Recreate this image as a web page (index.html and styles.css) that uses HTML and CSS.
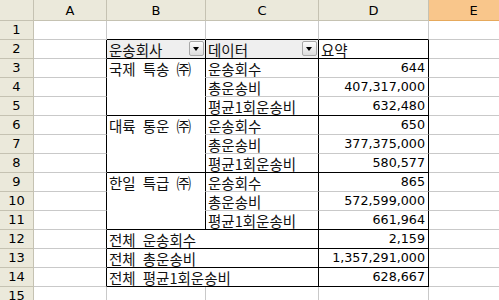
FILE: index.html
```html
<!DOCTYPE html>
<html lang="ko">
<head>
<meta charset="utf-8">
<link rel="stylesheet" href="styles.css">
</head>
<body>
<div class="sheet">
  <div class="corner"></div>
  <div class="ch">A</div>
  <div class="ch">B</div>
  <div class="ch">C</div>
  <div class="ch">D</div>
  <div class="ch sel">E</div>

  <div class="rh">1</div>
  <div class="c"></div>
  <div class="c bb"></div>
  <div class="c bb"></div>
  <div class="c bb"></div>
  <div class="c"></div>

  <div class="rh">2</div>
  <div class="c br"></div>
  <div class="c br bb field"><span class="fl">운송회사</span><span class="dd"></span></div>
  <div class="c br bb field"><span class="fl">데이터</span><span class="dd"></span></div>
  <div class="c br bb t">요약</div>
  <div class="c"></div>

  <div class="rh">3</div>
  <div class="c br"></div>
  <div class="c br nb t">국제 특송 ㈜</div>
  <div class="c br t">운송회수</div>
  <div class="c br n">644</div>
  <div class="c"></div>

  <div class="rh">4</div>
  <div class="c br"></div>
  <div class="c br nb"></div>
  <div class="c br t">총운송비</div>
  <div class="c br n">407,317,000</div>
  <div class="c"></div>

  <div class="rh">5</div>
  <div class="c br"></div>
  <div class="c br bb"></div>
  <div class="c br bb t">평균1회운송비</div>
  <div class="c br bb n">632,480</div>
  <div class="c"></div>

  <div class="rh">6</div>
  <div class="c br"></div>
  <div class="c br nb t">대륙 통운 ㈜</div>
  <div class="c br t">운송회수</div>
  <div class="c br n">650</div>
  <div class="c"></div>

  <div class="rh">7</div>
  <div class="c br"></div>
  <div class="c br nb"></div>
  <div class="c br t">총운송비</div>
  <div class="c br n">377,375,000</div>
  <div class="c"></div>

  <div class="rh">8</div>
  <div class="c br"></div>
  <div class="c br bb"></div>
  <div class="c br bb t">평균1회운송비</div>
  <div class="c br bb n">580,577</div>
  <div class="c"></div>

  <div class="rh">9</div>
  <div class="c br"></div>
  <div class="c br nb t">한일 특급 ㈜</div>
  <div class="c br t">운송회수</div>
  <div class="c br n">865</div>
  <div class="c"></div>

  <div class="rh">10</div>
  <div class="c br"></div>
  <div class="c br nb"></div>
  <div class="c br t">총운송비</div>
  <div class="c br n">572,599,000</div>
  <div class="c"></div>

  <div class="rh">11</div>
  <div class="c br"></div>
  <div class="c br bb"></div>
  <div class="c br bb t">평균1회운송비</div>
  <div class="c br bb n">661,964</div>
  <div class="c"></div>

  <div class="rh">12</div>
  <div class="c br"></div>
  <div class="c br bb t span2">전체 운송회수</div>
  <div class="c br bb n">2,159</div>
  <div class="c"></div>

  <div class="rh">13</div>
  <div class="c br"></div>
  <div class="c br bb t span2">전체 총운송비</div>
  <div class="c br bb n">1,357,291,000</div>
  <div class="c"></div>

  <div class="rh">14</div>
  <div class="c br"></div>
  <div class="c br bb t span2">전체 평균1회운송비</div>
  <div class="c br bb n">628,667</div>
  <div class="c"></div>

  <div class="rh">15</div>
  <div class="c"></div>
  <div class="c"></div>
  <div class="c"></div>
  <div class="c"></div>
  <div class="c"></div>
</div>
</body>
</html>
```

FILE: styles.css
```css
html, body {
  margin: 0;
  padding: 0;
  background: #ffffff;
}

.sheet {
  width: 499px;
  height: 300px;
  overflow: hidden;
  display: grid;
  grid-template-columns: 34px 73px 99px 113px 110px 90px;
  grid-template-rows: 21px repeat(15, 19px);
}

.sheet > div {
  box-sizing: border-box;
  overflow: hidden;
  white-space: nowrap;
}

.corner {
  background: #ebe9db;
  border-right: 1px solid #c5c2b2;
  border-bottom: 1px solid #c5c2b2;
}

.ch {
  background: #ebe9db;
  border-right: 1px solid #c5c2b2;
  border-bottom: 1px solid #c5c2b2;
  font-family: "DejaVu Sans", sans-serif;
  font-size: 13px;
  color: #000;
  display: flex;
  align-items: center;
  justify-content: center;
  padding-top: 1px;
}

.ch.sel {
  background: #f9c68b;
  border-bottom-color: #e6a95c;
}

.rh {
  background: #ebe9db;
  border-right: 1px solid #c5c2b2;
  border-bottom: 1px solid #c5c2b2;
  font-family: "DejaVu Sans", sans-serif;
  font-size: 13px;
  color: #000;
  display: flex;
  align-items: flex-start;
  justify-content: center;
  padding-top: 1px;
}

.c {
  border-right: 1px solid #c9c9c9;
  border-bottom: 1px solid #c9c9c9;
  display: flex;
  align-items: flex-end;
  color: #000;
}

.c.br { border-right-color: #000; }
.c.bb { border-bottom-color: #000; }
.c.nb { border-bottom-color: #ffffff; }

.span2 { grid-column: span 2; }

.t {
  font-family: "Noto Sans CJK KR", sans-serif;
  font-size: 14.5px;
  line-height: 17px;
  padding-left: 2px;
  word-spacing: 3px;
  color: #111;
}

.n {
  font-family: "DejaVu Sans", sans-serif;
  font-size: 12.7px;
  line-height: 16px;
  justify-content: flex-end;
  padding-right: 3px;
  padding-bottom: 1px;
}

.field {
  background: #efefef;
  font-family: "Noto Sans CJK KR", sans-serif;
  font-size: 14.5px;
  line-height: 17px;
  padding-left: 2px;
  align-items: flex-end;
  color: #111;
}

.fl {
  flex: 1;
}

.dd {
  position: relative;
  width: 13px;
  height: 13px;
  margin: 0 1px 2px 0;
  border: 1px solid #a8a8a8;
  border-radius: 2px;
  background: linear-gradient(#fdfdfd, #dcdcdc);
  flex: none;
}

.dd::after {
  content: "";
  position: absolute;
  left: 3px;
  top: 5px;
  border-left: 3.5px solid transparent;
  border-right: 3.5px solid transparent;
  border-top: 4px solid #000;
}
```
